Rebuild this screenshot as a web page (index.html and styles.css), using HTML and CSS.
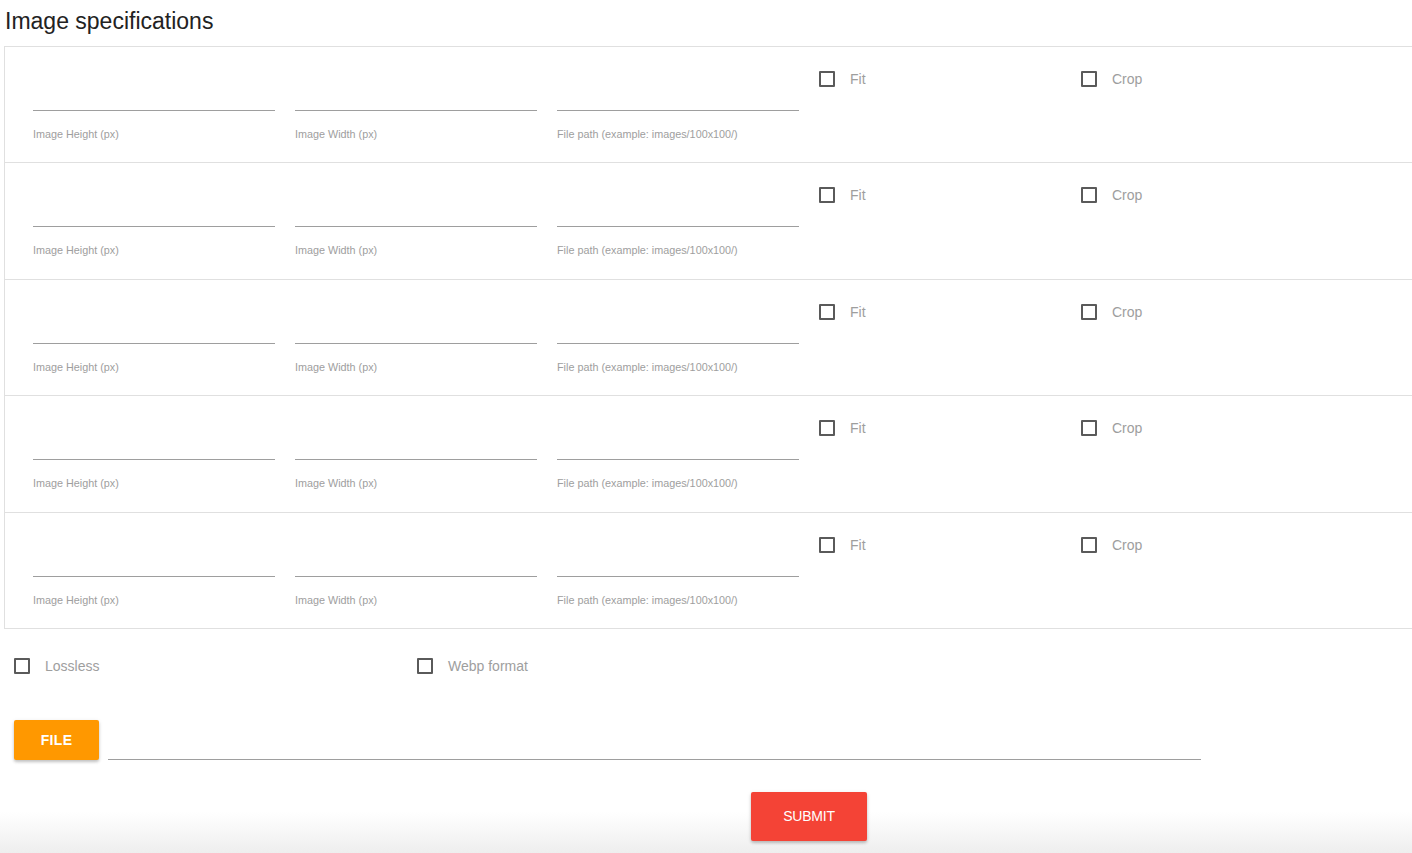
FILE: index.html
```html
<!DOCTYPE html>
<html>
<head>
<meta charset="utf-8">
<link rel="stylesheet" href="styles.css">
</head>
<body>
<h1 class="title">Image specifications</h1>
<div class="spec-table">
  <div class="spec-row">
    <div class="field"><div class="line"></div><div class="label">Image Height (px)</div></div>
    <div class="field"><div class="line"></div><div class="label">Image Width (px)</div></div>
    <div class="field"><div class="line"></div><div class="label">File path (example: images/100x100/)</div></div>
    <div class="check"><span class="box"></span><span class="check-label">Fit</span></div>
    <div class="check"><span class="box"></span><span class="check-label">Crop</span></div>
  </div>
  <div class="spec-row">
    <div class="field"><div class="line"></div><div class="label">Image Height (px)</div></div>
    <div class="field"><div class="line"></div><div class="label">Image Width (px)</div></div>
    <div class="field"><div class="line"></div><div class="label">File path (example: images/100x100/)</div></div>
    <div class="check"><span class="box"></span><span class="check-label">Fit</span></div>
    <div class="check"><span class="box"></span><span class="check-label">Crop</span></div>
  </div>
  <div class="spec-row">
    <div class="field"><div class="line"></div><div class="label">Image Height (px)</div></div>
    <div class="field"><div class="line"></div><div class="label">Image Width (px)</div></div>
    <div class="field"><div class="line"></div><div class="label">File path (example: images/100x100/)</div></div>
    <div class="check"><span class="box"></span><span class="check-label">Fit</span></div>
    <div class="check"><span class="box"></span><span class="check-label">Crop</span></div>
  </div>
  <div class="spec-row">
    <div class="field"><div class="line"></div><div class="label">Image Height (px)</div></div>
    <div class="field"><div class="line"></div><div class="label">Image Width (px)</div></div>
    <div class="field"><div class="line"></div><div class="label">File path (example: images/100x100/)</div></div>
    <div class="check"><span class="box"></span><span class="check-label">Fit</span></div>
    <div class="check"><span class="box"></span><span class="check-label">Crop</span></div>
  </div>
  <div class="spec-row">
    <div class="field"><div class="line"></div><div class="label">Image Height (px)</div></div>
    <div class="field"><div class="line"></div><div class="label">Image Width (px)</div></div>
    <div class="field"><div class="line"></div><div class="label">File path (example: images/100x100/)</div></div>
    <div class="check"><span class="box"></span><span class="check-label">Fit</span></div>
    <div class="check"><span class="box"></span><span class="check-label">Crop</span></div>
  </div>
</div>
<div class="options">
  <div class="check opt-lossless"><span class="box"></span><span class="check-label">Lossless</span></div>
  <div class="check"><span class="box"></span><span class="check-label">Webp format</span></div>
</div>
<div class="file-row">
  <div class="btn btn-file">FILE</div>
  <div class="file-line"></div>
</div>
<div class="submit-row">
  <div class="btn btn-submit">SUBMIT</div>
</div>
</body>
</html>
```
FILE: styles.css
```css
html {
  background: linear-gradient(to bottom, #ffffff 812px, #eeeeee 853px);
  background-repeat: no-repeat;
  height: 853px;
}
body {
  margin: 0;
  font-family: "Liberation Sans", Arial, sans-serif;
  overflow: hidden;
  height: 853px;
}
.title {
  margin: 0;
  padding: 8px 0 0 5px;
  height: 46px;
  box-sizing: border-box;
  font-size: 23px;
  font-weight: normal;
  line-height: 27px;
  color: #222;
}
.spec-table {
  margin-left: 4px;
  border: 1px solid #e0e0e0;
  border-right: none;
  border-bottom: none;
}
.spec-row {
  display: grid;
  grid-template-columns: repeat(5, 242px);
  column-gap: 20px;
  padding-left: 28px;
  height: 115.4px;
  border-bottom: 1px solid #e0e0e0;
}
.field {
  padding-top: 63px;
}
.line {
  height: 1px;
  background: #9e9e9e;
}
.label {
  margin-top: 17px;
  font-size: 10.8px;
  line-height: 13px;
  color: #9e9e9e;
}
.check {
  display: flex;
  align-items: center;
  height: 16px;
}
.spec-row .check {
  margin-top: 24px;
}
.box {
  width: 16px;
  height: 16px;
  box-sizing: border-box;
  border: 2px solid #5a5a5a;
  border-radius: 1px;
  flex: none;
}
.check-label {
  margin-left: 15px;
  font-size: 14px;
  color: #9e9e9e;
}
.options {
  display: flex;
  padding: 29px 0 0 14px;
}
.opt-lossless {
  width: 403px;
}
.file-row {
  display: flex;
  align-items: flex-end;
  padding: 46px 0 0 14px;
}
.btn {
  display: flex;
  align-items: center;
  justify-content: center;
  color: #fff;
  font-size: 14px;
  border-radius: 2px;
  box-shadow: 0 2px 3px rgba(0,0,0,0.2), 0 1px 5px rgba(0,0,0,0.08);
}
.btn-file {
  width: 85px;
  height: 40px;
  background: #ff9800;
  font-weight: bold;
  letter-spacing: 0.3px;
}
.file-line {
  width: 1093px;
  height: 1px;
  background: #9e9e9e;
  margin-left: 9px;
}
.submit-row {
  padding: 32px 0 0 751px;
}
.btn-submit {
  width: 116px;
  height: 49px;
  background: #f44336;
  letter-spacing: -0.2px;
}
```
